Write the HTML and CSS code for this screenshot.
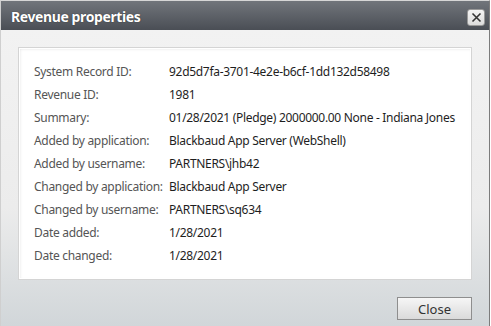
FILE: index.html
```html
<!DOCTYPE HTML>
<html>
  <head>
    <meta http-equiv="content-type" content="text/html; charset=utf-8">
    <title>Revenue properties</title>
    <link rel="stylesheet" href="styles.css">
  </head>
  <body>
    <div class="window">
      <div class="titlebar">
        <span class="title">Revenue properties</span>
        <a href="#" class="closebox">
          <svg width="11" height="11" viewBox="0 0 11 11"><path d="M1.5 1.5 L9.5 9.5 M9.5 1.5 L1.5 9.5" stroke="#333" stroke-width="1.6"/></svg>
        </a>
      </div>
      <div class="content">
        <div class="panel">
          <table class="props">
            <tr><td class="lbl">System Record ID:</td><td>92d5d7fa-3701-4e2e-b6cf-1dd132d58498</td></tr>
            <tr><td class="lbl">Revenue ID:</td><td>1981</td></tr>
            <tr><td class="lbl">Summary:</td><td>01/28/2021 (Pledge) 2000000.00 None - Indiana Jones</td></tr>
            <tr><td class="lbl">Added by application:</td><td>Blackbaud App Server (WebShell)</td></tr>
            <tr><td class="lbl">Added by username:</td><td>PARTNERS\jhb42</td></tr>
            <tr><td class="lbl">Changed by application:</td><td>Blackbaud App Server</td></tr>
            <tr><td class="lbl">Changed by username:</td><td>PARTNERS\sq634</td></tr>
            <tr><td class="lbl">Date added:</td><td>1/28/2021</td></tr>
            <tr><td class="lbl">Date changed:</td><td>1/28/2021</td></tr>
          </table>
        </div>
        <div class="footer">
          <button class="btn">Close</button>
        </div>
      </div>
    </div>
  </body>
</html>
```

FILE: styles.css
```css
body{margin:0; padding:0; background:#fff; font-family:"Noto Sans", "Open Sans", sans-serif;}
.window{width:488px; height:325px; border-top:1px solid #d6d6d6; border-left:1px solid #cfcfcf; border-right:1px solid #7c7c7c; display:flex; flex-direction:column;}
.titlebar{height:29px; box-sizing:border-box; background:linear-gradient(#71757b, #4a4e55); display:flex; align-items:center; justify-content:space-between; padding:1px 4px 0 10px;}
.title{color:#fff; font-weight:bold; font-size:14px; letter-spacing:-0.4px; text-shadow:0 0 1px #222;}
.closebox{width:16px; height:15px; margin-top:2px; background:linear-gradient(#f4f4f4, #dcdcdc); border:1px solid #999; border-radius:3px; display:flex; align-items:center; justify-content:center;}
.content{flex:1; background:linear-gradient(#f2f2f2 0%, #ececec 60%, #d1d6d9 100%); padding:17px 17px 0 17px; display:flex; flex-direction:column;}
.panel{box-sizing:border-box; background:#fff; border:1px solid #d4d4d4; box-shadow:inset 0 0 0 1px #fff, inset 1px 1px 3px #e2e2e2; height:233px; padding:12px 15px 0 15px;}
.props{border-collapse:collapse; font-size:12px;}
.props td{padding:0; height:23px; color:#1e1e1e; white-space:nowrap; letter-spacing:-0.3px;}
.props td.lbl{width:135px; color:#555;}
.footer{display:flex; justify-content:flex-end; padding-top:17px;}
.btn{width:75px; height:23px; border:1px solid #8e8e8e; background:linear-gradient(#f6f6f6, #dadada); font-family:inherit; font-size:13px; color:#333; padding:0;}
```
